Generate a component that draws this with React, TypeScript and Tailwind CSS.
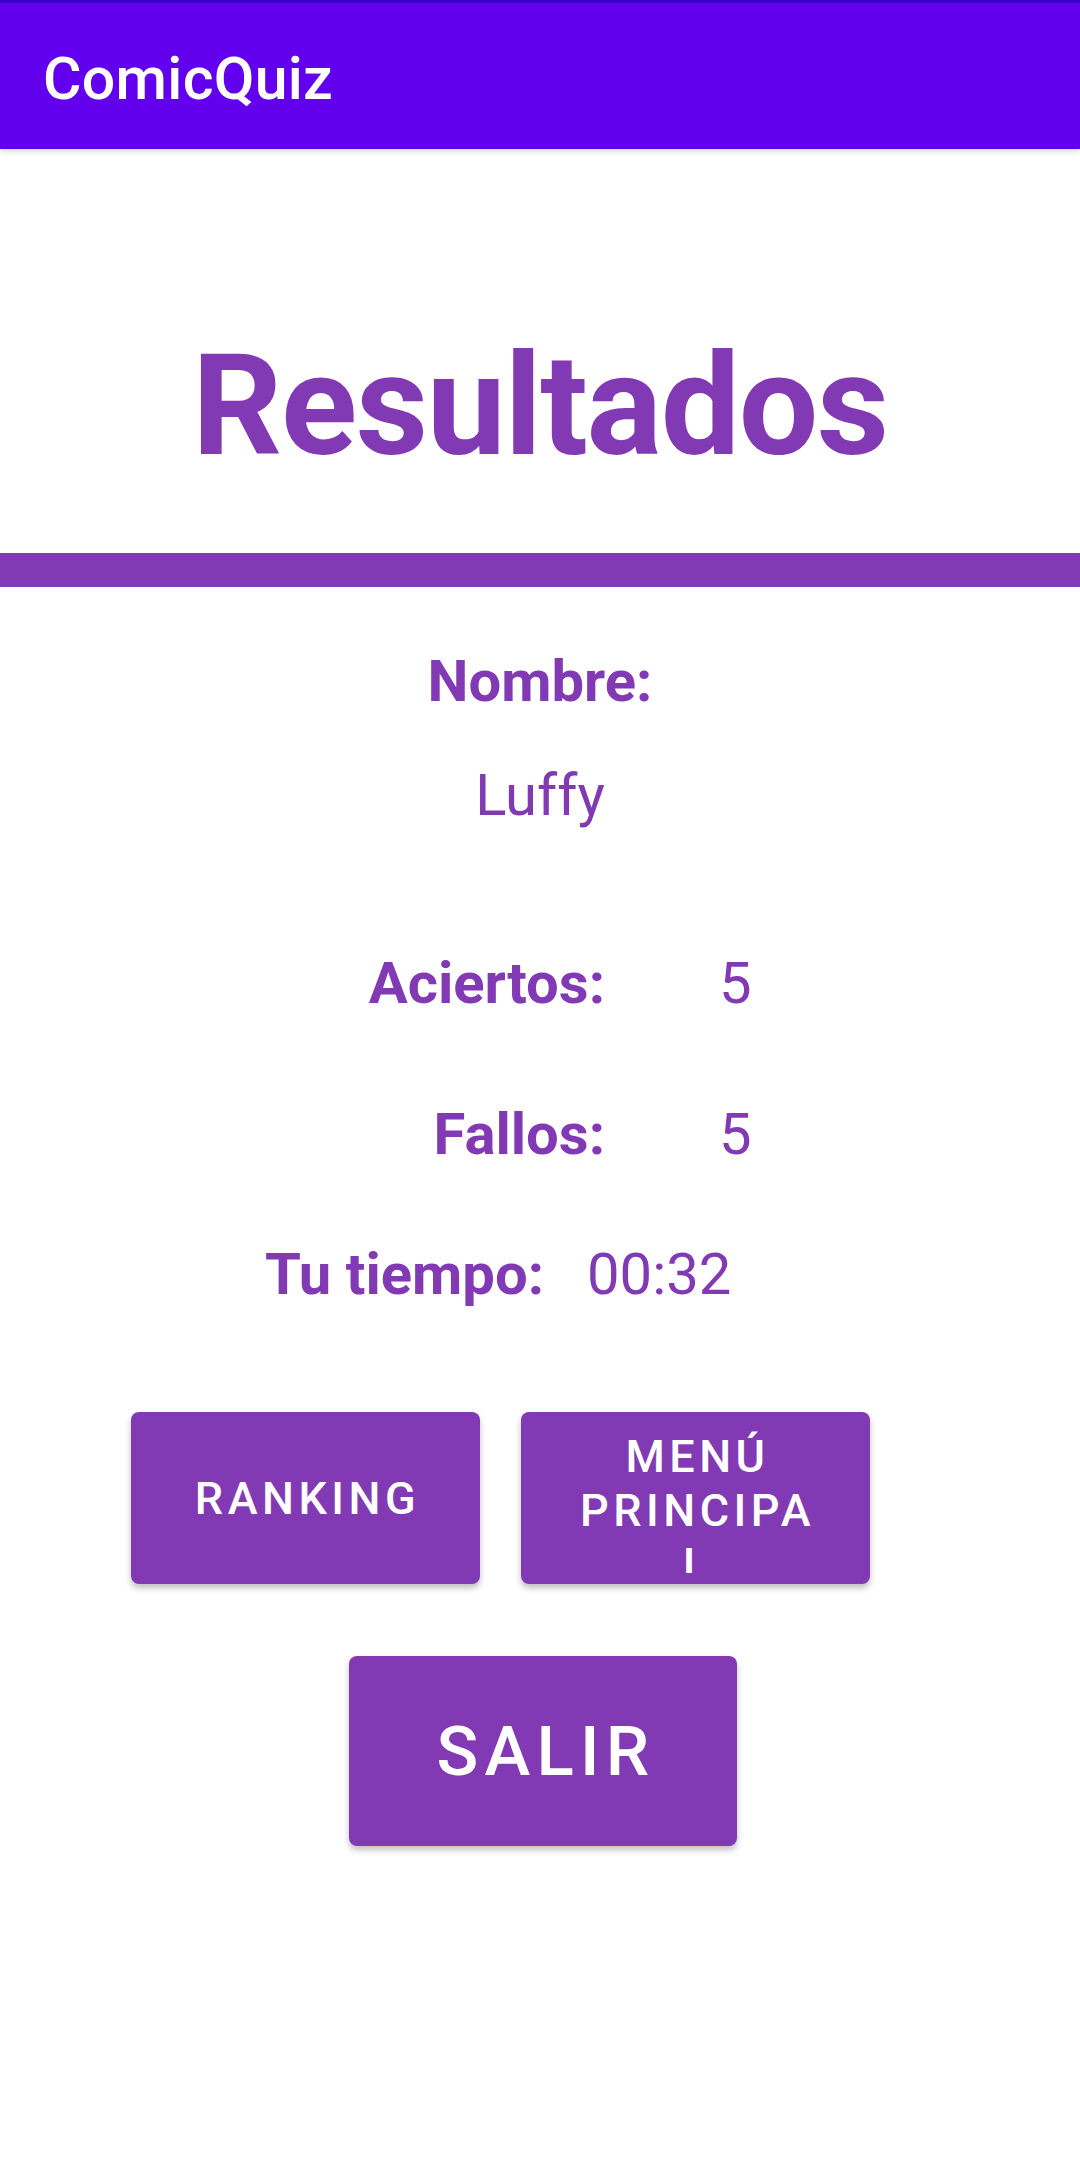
import React from "react";

const purple = "bg-[#823AB4]";

function StatRow({ label, value, labelW, gap }: { label: string; value: string; labelW: string; gap: string }) {
  return (
    <div className="flex items-start">
      <div className={`${labelW} text-right font-bold text-[58px] leading-none text-[#823AB4]`}>{label}</div>
      <div className={`${gap} text-[58px] leading-none text-[#823AB4]`}>{value}</div>
    </div>
  );
}

export default function App() {
  return (
    <div className="min-h-[2178px] w-[1080px] bg-white font-['Roboto',sans-serif]">
      {/* App bar */}
      <div className="relative z-10 shadow-[0_2px_6px_rgba(0,0,0,0.18)]">
        <div className="h-[3px] bg-[#3D00C4]" />
        <div className="h-[146px] bg-[#6200EE] pl-[43px] pt-[46px]">
          <div className="text-[59px] leading-none font-medium text-white tracking-[0.3px]">ComicQuiz</div>
        </div>
      </div>

      {/* Title */}
      <div className="pt-[186px] text-center">
        <div className="text-[141px] leading-none font-bold text-[#823AB4] tracking-[-1.4px]">Resultados</div>
      </div>

      {/* Divider bar */}
      <div className={`mt-[77px] h-[34px] ${purple}`} />

      {/* Nombre */}
      <div className="pt-[65px] flex flex-col items-center">
        <div className="text-[58px] leading-none font-bold text-[#823AB4]">Nombre:</div>
        <div className="mt-[56px] text-[58px] leading-none text-[#823AB4]">Luffy</div>
      </div>

      <div className="mt-[130px] flex flex-col">
        <StatRow label="Aciertos:" value="5" labelW="w-[605px]" gap="ml-[114px]" />
        <div className="mt-[93px]">
          <StatRow label="Fallos:" value="5" labelW="w-[605px]" gap="ml-[114px]" />
        </div>
        <div className="mt-[82px]">
          <StatRow label="Tu tiempo:" value="00:32" labelW="w-[544px]" gap="ml-[43px]" />
        </div>
      </div>

      {/* Buttons */}
      <div className="mt-[109px] flex gap-[41px] pl-[131px]">
        <div className={`w-[349px] h-[172px] rounded-[8px] ${purple} shadow-[0_4px_6px_rgba(0,0,0,0.25)] flex items-center justify-center`}>
          <span className="text-white font-medium text-[45px] leading-none tracking-[0.1em] pl-[4px]">RANKING</span>
        </div>
        <div className={`w-[349px] h-[172px] rounded-[8px] ${purple} shadow-[0_4px_6px_rgba(0,0,0,0.25)] flex flex-col items-center`}>
          <div className="mt-[18px] h-[143px] overflow-hidden text-center text-white font-medium text-[45px] leading-[54px] tracking-[0.1em] pl-[4px]">
            <div>MENÚ</div>
            <div>PRINCIPA</div>
            <div>L</div>
          </div>
        </div>
      </div>

      <div className="mt-[72px] pl-[349px]">
        <div className={`w-[388px] h-[190px] rounded-[8px] ${purple} shadow-[0_4px_6px_rgba(0,0,0,0.25)] flex items-center justify-center`}>
          <span className="text-white font-medium text-[69px] leading-none tracking-[0.09em] pl-[6px]">SALIR</span>
        </div>
      </div>
    </div>
  );
}
